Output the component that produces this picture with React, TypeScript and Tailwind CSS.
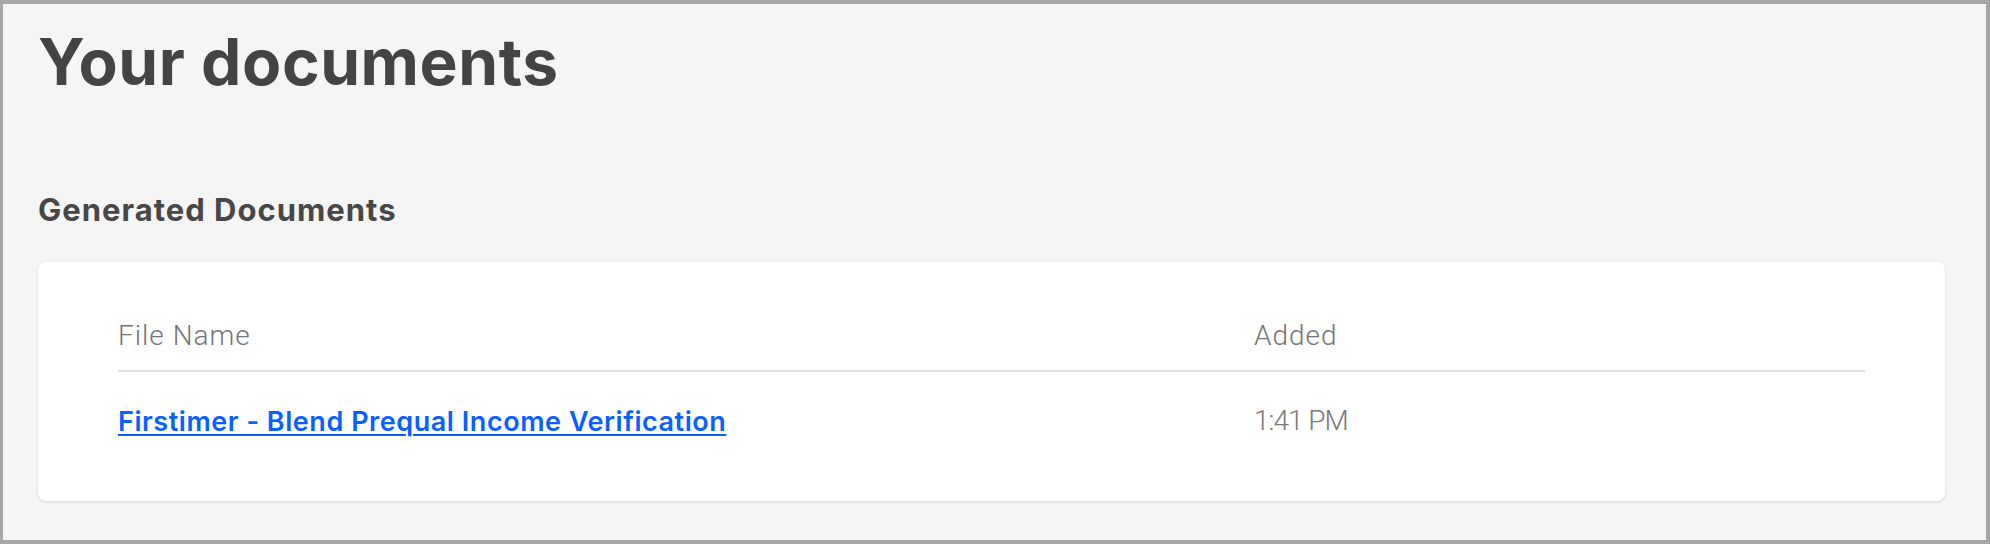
import React from "react";

export default function App() {
  return (
    <div className="w-[1990px] h-[544px] bg-[#a6a6a6] pt-[4px] pl-[3px] pr-[4px] pb-[4px]">
      <div className="w-full h-full bg-[#f5f5f5] pl-[35px] pr-[41px] pt-[26px] overflow-hidden font-['Inter',sans-serif]">
        <h1 className="text-[64px] leading-none font-bold text-[#444444] tracking-[0.6px]">
          Your documents
        </h1>
        <h2 className="mt-[100px] text-[31px] leading-none font-bold text-[#474747] tracking-[1px]">
          Generated Documents
        </h2>
        <div className="mt-[37px] bg-white rounded-[8px] shadow-[0_1px_3px_rgba(0,0,0,0.14)] px-[80px] pt-[60px] pb-[66px]">
          <div className="grid grid-cols-[1136px_1fr] pb-[20px] border-b-2 border-[#e0e0e0] text-[28px] leading-none font-light text-[#757575] font-['Roboto',sans-serif] tracking-[1px]">
            <div>File Name</div>
            <div>Added</div>
          </div>
          <div className="grid grid-cols-[1136px_1fr] pt-[35px] items-center">
            <a
              href="#"
              className="text-[27px] leading-none font-semibold text-[#0a5fff] underline decoration-2 underline-offset-[3px] justify-self-start tracking-[0.55px]"
            >
              Firstimer - Blend Prequal Income Verification
            </a>
            <div className="text-[28px] leading-none font-light text-[#7a7a7a] font-['Roboto',sans-serif] tracking-[-1px]">
              1:41 PM
            </div>
          </div>
        </div>
      </div>
    </div>
  );
}
